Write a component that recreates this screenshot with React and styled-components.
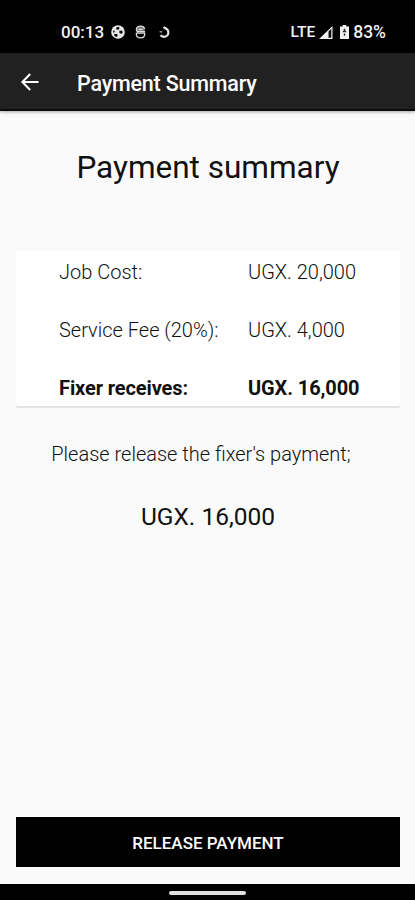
import React from 'react';
import styled, { createGlobalStyle } from 'styled-components';

const rows = [
  { label: 'Job Cost:', amount: 'UGX. 20,000' },
  { label: 'Service Fee (20%):', amount: 'UGX. 4,000' },
  { label: 'Fixer receives:', amount: 'UGX. 16,000', strong: true },
];

function App() {
  return (
    <Screen>
      <GlobalStyle />
      <StatusBar>
        <StatusGroup>
          <Clock>00:13</Clock>
          <StatusIcon width="14" height="14" viewBox="0 0 14 14" $left={7}>
            <circle cx="7" cy="7" r="6.8" fill="#e9e9e9" />
            <path d="M5.2 2.4l2.6-.6.8 1.6-1.4 1.4-2-.4zM8.6 5.6l2.6.2.6 1.8-1.6 1.4-2-1.200zM2.2 5.400l1.600.4-.4 1.600-1.400.2zM3.400 8.800l2.800.2.6 2-1.800 1-1.800-1.200z" fill="#111" />
          </StatusIcon>
          <StatusIcon width="11" height="14" viewBox="0 0 11 14" $left={10}>
            <path d="M1.400 6V4.600C1.400 2.400 2.900 1.200 5.500 1.200S9.600 2.400 9.600 4.600V6z" fill="#777" />
            <path d="M9.600 3.800C9.200 2 7.800 1.200 5.500 1.200S1.400 2.400 1.400 4.400 2.200 6.600 3.800 6.600H10M1.400 8.200H9.600V9.400C9.600 11.600 8.100 12.800 5.500 12.800S1.400 11.600 1.400 9.400zM3.600 4.300h4" fill="none" stroke="#ddd" strokeWidth="1.3" />
          </StatusIcon>
          <StatusIcon width="11" height="14" viewBox="0 0 11 14" $left={13}>
            <path d="M4.500 2C5.600 3.200 9.400 3.600 9.400 7.200 9.400 10 7.300 11.800 4.900 11.800 3.500 11.800 2.300 11.200 1.600 10.200" fill="none" stroke="#e6e6e6" strokeWidth="2.2" />
            <path d="M.5 6.800h2.800" stroke="#888" strokeWidth="1.6" />
          </StatusIcon>
        </StatusGroup>
        <StatusGroup>
          <Network>LTE</Network>
          <StatusIcon width="14" height="13" viewBox="0 0 14 13" $left={4}>
            <path d="M0 13L13.5 0v13z" fill="#f2f2f2" />
            <path d="M9.5 5.500L12.300 2.800V11.800H9.500z" fill="#111" />
          </StatusIcon>
          <StatusIcon width="9" height="14" viewBox="0 0 9 14" $left={7}>
            <path d="M2.700 0h3.600v1.500H9V14H0V1.500h2.700z" fill="#f2f2f2" />
            <path d="M4.500 3.800v3.400M4.500 8.600v2.200M2.800 6.400h3.400" stroke="#333" strokeWidth="1.500" />
          </StatusIcon>
          <Battery>83%</Battery>
        </StatusGroup>
      </StatusBar>
      <AppBar>
        <BackButton aria-label="Back">
          <svg width="18" height="18" viewBox="0 0 18 18" fill="none" stroke="#fff" strokeWidth="2">
            <path d="M17.500 9H1.600M9.200 1L1.400 9l7.800 8" />
          </svg>
        </BackButton>
        <BarTitle>Payment Summary</BarTitle>
      </AppBar>
      <Content>
        <Heading>Payment summary</Heading>
        <Card>
          {rows.map((row) => (
            <Row key={row.label} $strong={row.strong}>
              <span>{row.label}</span>
              <span>{row.amount}</span>
            </Row>
          ))}
        </Card>
        <Prompt>Please release the fixer's payment;</Prompt>
        <Total>UGX. 16,000</Total>
        <ReleaseButton>RELEASE PAYMENT</ReleaseButton>
      </Content>
      <NavBar>
        <Handle />
      </NavBar>
    </Screen>
  );
}

const GlobalStyle = createGlobalStyle`
  body {
    margin: 0;
    font-family: Roboto, sans-serif;
  }

  * {
    box-sizing: border-box;
  }
`;

const Screen = styled.div`
  display: flex;
  flex-direction: column;
  width: 415px;
  height: 900px;
  overflow: hidden;
  background-color: #fafafa;
  color: #111;
`;

const StatusBar = styled.header`
  display: flex;
  justify-content: space-between;
  height: 53px;
  padding: 12px 29px 0 61px;
  background-color: #000;
  color: #f2f2f2;
`;

const StatusGroup = styled.div`
  display: flex;
  align-items: center;
  height: 40px;
`;

const Clock = styled.span`
  font-size: 17px;
  font-weight: 500;
`;

const Network = styled.span`
  font-size: 15.5px;
  font-weight: 500;
`;

const Battery = styled.span`
  margin-left: 4px;
  font-size: 17.5px;
  font-weight: 500;
`;

const StatusIcon = styled.svg`
  flex: none;
  margin-left: ${(props) => props.$left}px;
`;

const AppBar = styled.div`
  position: relative;
  display: flex;
  align-items: center;
  flex: none;
  height: 58px;
  padding: 2px 0 0 21px;
  background-color: #212121;
  border-bottom: 2px solid #0c0c0c;
  box-shadow: 0 1px 3px rgba(0, 0, 0, 0.35);
  color: #fff;
`;

const BackButton = styled.button`
  display: flex;
  width: 56px;
  padding: 0;
  border: 0;
  background: none;
`;

const BarTitle = styled.div`
  padding-top: 3px;
  font-size: 21.5px;
  font-weight: 500;
  letter-spacing: -0.2px;
`;

const Content = styled.main`
  display: flex;
  flex-direction: column;
  flex: 1;
  padding: 0 15px 17px 16px;
`;

const Heading = styled.h1`
  margin: 37px 0 0;
  font-size: 31.5px;
  font-weight: 400;
  line-height: 40px;
  text-align: center;
`;

const Card = styled.section`
  margin-top: 63px;
  height: 155px;
  background-color: #fff;
  border-radius: 2px;
  box-shadow: 0 2px 1px rgba(0, 0, 0, 0.1);
`;

const Row = styled.div`
  display: grid;
  grid-template-columns: 189px 1fr;
  height: 58px;
  padding-left: 43px;
  font-size: 20px;
  font-weight: ${(props) => (props.$strong ? 700 : 300)};
  line-height: 42px;
  letter-spacing: ${(props) => (props.$strong ? '-0.1px' : 'normal')};
`;

const Prompt = styled.p`
  margin: 34px 0 0;
  padding-right: 14px;
  font-size: 20px;
  font-weight: 300;
  line-height: 28px;
  text-align: center;
`;

const Total = styled.p`
  margin: 33px 0 0;
  font-size: 24.5px;
  font-weight: 400;
  line-height: 32px;
  text-align: center;
`;

const ReleaseButton = styled.button`
  height: 50px;
  margin-top: auto;
  padding: 2px 0 0;
  border: 1px solid #000;
  background-color: #000;
  color: #fff;
  font-family: inherit;
  font-size: 17px;
  font-weight: 500;
`;

const NavBar = styled.footer`
  display: flex;
  justify-content: center;
  align-items: center;
  height: 16px;
  padding-top: 2px;
  background-color: #000;
`;

const Handle = styled.div`
  width: 77px;
  height: 4px;
  border-radius: 2px;
  background-color: #e0e0e0;
`;

export default App;
